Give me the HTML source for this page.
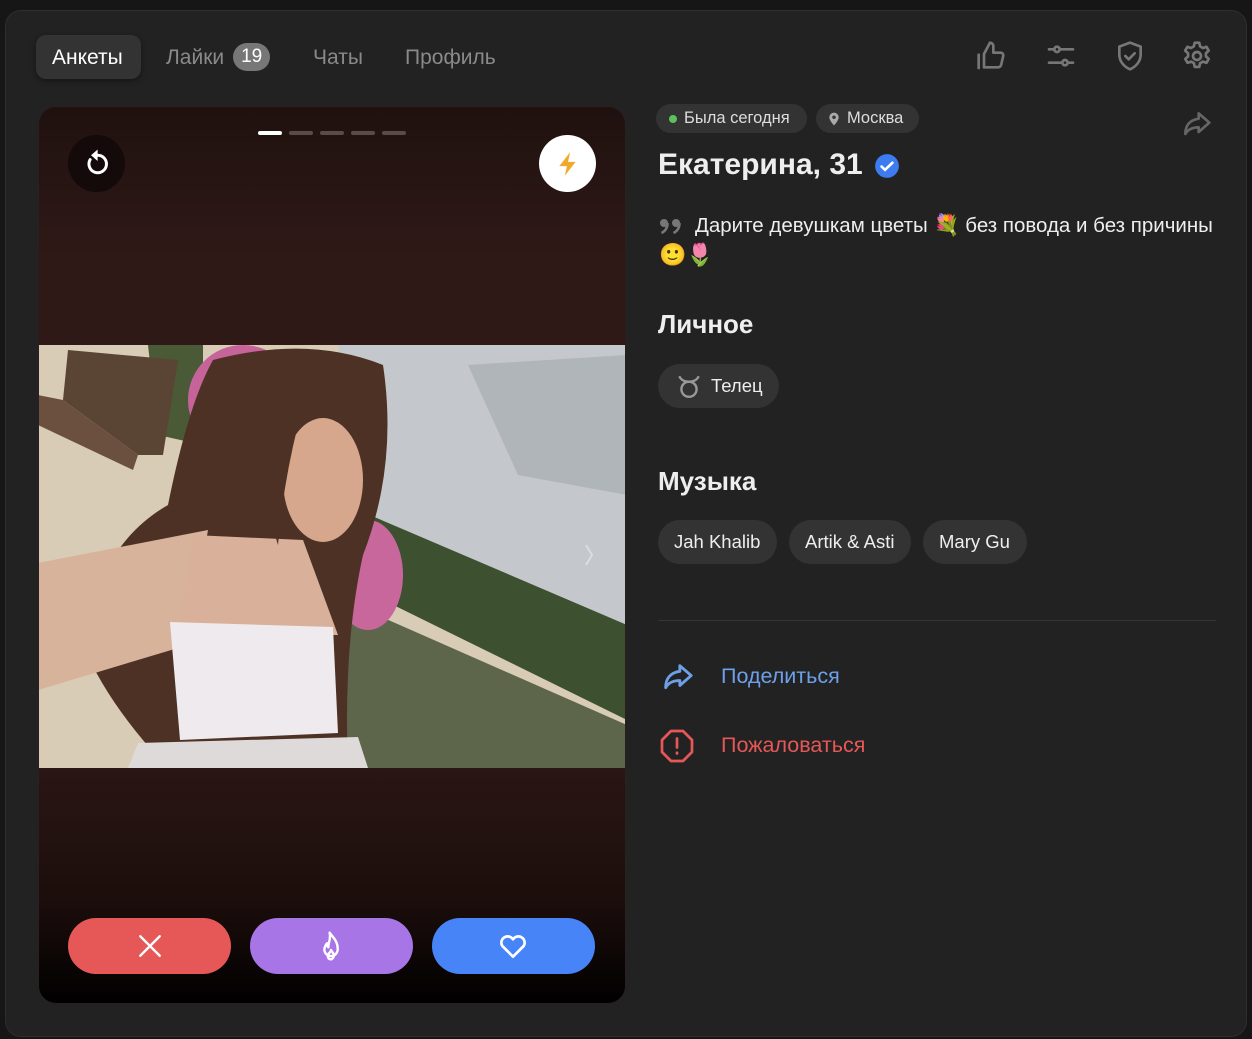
<!DOCTYPE html>
<html><head><meta charset="utf-8"><style>
*{box-sizing:border-box;margin:0;padding:0}
body{width:1252px;height:1039px;background:#161616;font-family:"Liberation Sans",sans-serif;position:relative;overflow:hidden;color:#eee}
.panel{position:absolute;left:5px;top:10px;width:1242px;height:1027px;background:#222;border:1px solid #2e2e2e;border-radius:16px}
.abs{position:absolute}
.tab{position:absolute;top:36px;height:43px;line-height:43px;font-size:21px;color:#8a8a8a}
.badge{display:inline-block;background:#777;color:#fff;border-radius:14px;height:28px;line-height:28px;padding:0 8px;font-size:19px;vertical-align:2px;margin-left:9px}
.ic{position:absolute;top:40px;width:32px;height:32px}
.pill{position:absolute;background:#333;border-radius:16px;color:#ddd;font-size:16.5px;height:29px;line-height:29px;padding:0 12px}
.chip{position:absolute;background:#333;border-radius:22px;color:#eee;font-size:18.5px;height:44px;line-height:44px;padding:0 16px}
h2{position:absolute;font-size:26px;font-weight:bold;color:#eee}
.btn{position:absolute;top:918px;width:163px;height:56px;border-radius:28px}
</style></head><body>
<div class="panel"></div>
<div class="abs" style="left:36px;top:35px;width:105px;height:44px;background:#333;border-radius:10px;box-shadow:0 2px 6px rgba(0,0,0,.4)"></div>
<div class="tab" style="left:52px;color:#fff">Анкеты</div>
<div class="tab" style="left:166px">Лайки<span class="badge">19</span></div>
<div class="tab" style="left:313px">Чаты</div>
<div class="tab" style="left:405px">Профиль</div>

<svg class="ic" style="left:976px" viewBox="0 0 24 24" fill="none" stroke="#777" stroke-width="2" stroke-linecap="round" stroke-linejoin="round"><path d="M2 11v10M6 20.5h10.5a2.5 2.5 0 0 0 2.4-2l1.5-6.5A2 2 0 0 0 18.5 9.5H13V4.5A2.5 2.5 0 0 0 10.5 2L6 10.5z"/></svg>
<svg class="ic" style="left:1045px" viewBox="0 0 24 24" fill="none" stroke="#777" stroke-width="2" stroke-linecap="round"><path d="M3 7h4M11 7h10M3 17h10M17 17h4"/><circle cx="9" cy="7" r="2"/><circle cx="15" cy="17" r="2"/></svg>
<svg class="ic" style="left:1114px" viewBox="0 0 24 24" fill="none" stroke="#777" stroke-width="2" stroke-linecap="round" stroke-linejoin="round"><path d="M12 2l8 3v6c0 5-3.5 9-8 11-4.5-2-8-6-8-11V5z"/><path d="M8.5 12l2.5 2.5 4.5-4.5"/></svg>
<svg class="ic" style="left:1181px" viewBox="0 0 24 24" fill="none" stroke="#777" stroke-width="2" stroke-linejoin="round"><path d="M10.3 2h3.4l.6 2.8 2.1 1.2 2.7-.9 1.7 2.9-2.1 1.9v2.4l2.1 1.9-1.7 2.9-2.7-.9-2.1 1.2-.6 2.8h-3.4l-.6-2.8-2.1-1.2-2.7.9-1.7-2.9 2.1-1.9v-2.4L3.1 8l1.7-2.9 2.7.9 2.1-1.2z"/><circle cx="12" cy="12" r="3"/></svg>

<!-- card -->
<div class="abs" style="left:38px;top:106px;width:588px;height:898px;border-radius:18px;overflow:hidden;background:linear-gradient(#1f110f 0px,#2f1917 150px,#2f1917 240px,#2a1614 660px,#1c0e0c 790px,#000 898px);border:1px solid #2a2020">
 <svg class="abs" style="left:-1px;top:238px" width="589" height="423" viewBox="0 0 589 423">
  <rect width="589" height="423" fill="#d8ccb6"/>
  <polygon points="300,0 589,0 589,290 325,170" fill="#c4c8cc"/>
  <polygon points="430,20 589,10 589,150 480,130" fill="#b0b5ba"/>
  <polygon points="110,0 165,0 165,100 120,90" fill="#4a5a36"/>
  <polygon points="320,165 589,280 589,375 335,250" fill="#3d5030"/>
  <polygon points="305,255 589,380 589,423 305,423" fill="#5d664b"/>
  <circle cx="205" cy="55" r="55" fill="#c6649a"/>
  <polygon points="30,5 140,15 125,110 100,110 25,55" fill="#5a4434"/>
  <polygon points="0,50 25,55 100,110 95,125 0,80" fill="#6b5040"/>
  <ellipse cx="330" cy="230" rx="35" ry="55" fill="#c8679c"/>
  <path d="M175 15 Q270 -10 345 20 Q360 120 325 210 Q305 300 310 423 L130 423 Q70 360 45 300 Q60 200 130 160 Q150 60 175 15z" fill="#4d3124"/>
  <polygon points="0,218 170,185 150,300 0,345" fill="#d8b39c"/>
  <polygon points="155,190 265,195 300,290 140,290" fill="#d9b09a"/>
  <ellipse cx="285" cy="135" rx="40" ry="62" fill="#d6a68d"/>
  <path d="M230 40 Q310 20 340 80 Q300 60 260 80 Q245 140 240 200 Q215 120 230 40z" fill="#4d3124"/>
  <polygon points="132,277 295,282 300,388 142,395" fill="#eeeaee"/>
  <polygon points="100,398 320,392 330,423 90,423" fill="#dedad9"/>
  <path d="M548 200 l6 10 -6 10" fill="none" stroke="#e6e6e6" stroke-width="2" opacity=".7"/>
 </svg>
 <div class="abs" style="left:219px;top:24px;width:24px;height:4px;border-radius:2px;background:#fff"></div>
 <div class="abs" style="left:250px;top:24px;width:24px;height:4px;border-radius:2px;background:#5a4a48"></div>
 <div class="abs" style="left:281px;top:24px;width:24px;height:4px;border-radius:2px;background:#5a4a48"></div>
 <div class="abs" style="left:312px;top:24px;width:24px;height:4px;border-radius:2px;background:#5a4a48"></div>
 <div class="abs" style="left:343px;top:24px;width:24px;height:4px;border-radius:2px;background:#5a4a48"></div>
 <div class="abs" style="left:29px;top:28px;width:57px;height:57px;border-radius:50%;background:#140a09"></div>
 <svg class="abs" style="left:43px;top:42px" width="30" height="30" viewBox="0 0 24 24" fill="none" stroke="#fff" stroke-width="2.4" stroke-linecap="round"><path d="M6.5 8.5A7 7 0 1 0 12 5"/><path d="M12 1.5v7l-4-3.5z" fill="#fff" stroke-width="1"/></svg>
 <div class="abs" style="left:500px;top:28px;width:57px;height:57px;border-radius:50%;background:#fff"></div>
 <svg class="abs" style="left:516px;top:43px" width="26" height="28" viewBox="0 0 24 24"><path d="M14 1L4 14h7l-2 9 10-13h-7z" fill="#f0a92a"/></svg>
</div>
<div class="btn" style="left:68px;background:#e55857"></div>
<svg class="abs" style="left:137px;top:933px" width="26" height="26" viewBox="0 0 24 24" stroke="#fff" stroke-width="2.2" stroke-linecap="round"><path d="M3 3l18 18M21 3L3 21"/></svg>
<div class="btn" style="left:250px;background:#a775e6"></div>
<svg class="abs" style="left:315px;top:929px" width="32" height="34" viewBox="0 0 24 24" fill="none" stroke="#fff" stroke-width="1.8" stroke-linejoin="round"><path d="M11 2c2 3 6 6 6 12a5 5 0 0 1-10 1c0-3 2-5 2-5 0 2 1 3 1 3 0-4 2-6 1-11z"/><path d="M12 22c-2 0-3-2-2-4 1-1 2-2 2-3 1 2 3 3 2 5-.5 1-1 2-2 2"/></svg>
<div class="btn" style="left:432px;background:#4784f8"></div>
<svg class="abs" style="left:497px;top:930px" width="32" height="32" viewBox="0 0 24 24" fill="none" stroke="#fff" stroke-width="2" stroke-linejoin="round"><path d="M12 20L4 12a4.5 4.5 0 0 1 8-5 4.5 4.5 0 0 1 8 5z"/></svg>

<!-- right -->
<div class="pill" style="left:656px;top:104px;padding-left:28px;width:151px">Была сегодня</div>
<div class="abs" style="left:669px;top:115px;width:8px;height:8px;border-radius:50%;background:#5bc25b"></div>
<div class="pill" style="left:816px;top:104px;padding-left:31px;width:103px">Москва</div>
<svg class="abs" style="left:827px;top:111px" width="14" height="16" viewBox="0 0 24 24"><path d="M12 1a8 8 0 0 0-8 8c0 6 8 14 8 14s8-8 8-14a8 8 0 0 0-8-8z" fill="#aaa"/><circle cx="12" cy="9" r="3" fill="#333"/></svg>
<svg class="abs" style="left:1179px;top:108px" width="34" height="32" viewBox="0 0 24 24" fill="none" stroke="#666" stroke-width="2" stroke-linejoin="round"><path d="M14 4l8 7-8 7v-3.5c-5 0-8 1.5-10 5 0-6 3-10.5 10-11.5z"/></svg>
<div class="abs" style="left:658px;top:148px;font-size:30px;font-weight:bold;color:#eee">Екатерина, 31</div>
<svg class="abs" style="left:874px;top:153px" width="26" height="26" viewBox="0 0 24 24"><circle cx="12" cy="12" r="11" fill="#3c7bf0"/><path d="M7 12.5l3.2 3L17 9" fill="none" stroke="#fff" stroke-width="2.4" stroke-linecap="round"/></svg>
<svg class="abs" style="left:659px;top:218px" width="24" height="16" viewBox="0 0 24 16"><circle cx="5" cy="5" r="4" fill="#777"/><path d="M8.5 5q0 7-6 10" stroke="#777" stroke-width="2.6" fill="none"/><circle cx="17" cy="5" r="4" fill="#777"/><path d="M20.5 5q0 7-6 10" stroke="#777" stroke-width="2.6" fill="none"/></svg>
<div class="abs" style="left:695px;top:211px;font-size:20.5px;line-height:29px;color:#eee;white-space:nowrap">Дарите девушкам цветы <span style="font-size:21px">💐</span> без повода и без причины</div>
<div class="abs" style="left:659px;top:240px;font-size:22px;line-height:29px">🙂🌷</div>

<h2 style="left:658px;top:309px">Личное</h2>
<div class="chip" style="left:658px;top:364px;padding-left:53px;width:121px">Телец</div>
<svg class="abs" style="left:676px;top:373px" width="26" height="26" viewBox="0 0 24 24" fill="none" stroke="#999" stroke-width="2.2"><circle cx="12" cy="15" r="7"/><path d="M3 3c2 4 5 5 9 5s7-1 9-5"/></svg>
<h2 style="left:658px;top:466px">Музыка</h2>
<div class="chip" style="left:658px;top:520px;width:119px">Jah Khalib</div>
<div class="chip" style="left:789px;top:520px;width:122px">Artik &amp; Asti</div>
<div class="chip" style="left:923px;top:520px;width:104px">Mary Gu</div>
<div class="abs" style="left:658px;top:620px;width:558px;height:1px;background:#353535"></div>
<svg class="abs" style="left:659px;top:660px" width="36" height="34" viewBox="0 0 24 24" fill="none" stroke="#6ea0ea" stroke-width="2" stroke-linejoin="round"><path d="M14 4l8 7-8 7v-3.5c-5 0-8 1.5-10 5 0-6 3-10.5 10-11.5z"/></svg>
<div class="abs" style="left:721px;top:664px;font-size:21.5px;color:#6ea0ea">Поделиться</div>
<svg class="abs" style="left:659px;top:728px" width="36" height="36" viewBox="0 0 24 24" fill="none" stroke="#e55857" stroke-width="1.8" stroke-linejoin="round" stroke-linecap="round"><path d="M8 2h8l6 6v8l-6 6H8l-6-6V8z"/><path d="M12 7v6M12 16.5v.5"/></svg>
<div class="abs" style="left:721px;top:733px;font-size:21.5px;color:#e55857">Пожаловаться</div>
</body></html>
